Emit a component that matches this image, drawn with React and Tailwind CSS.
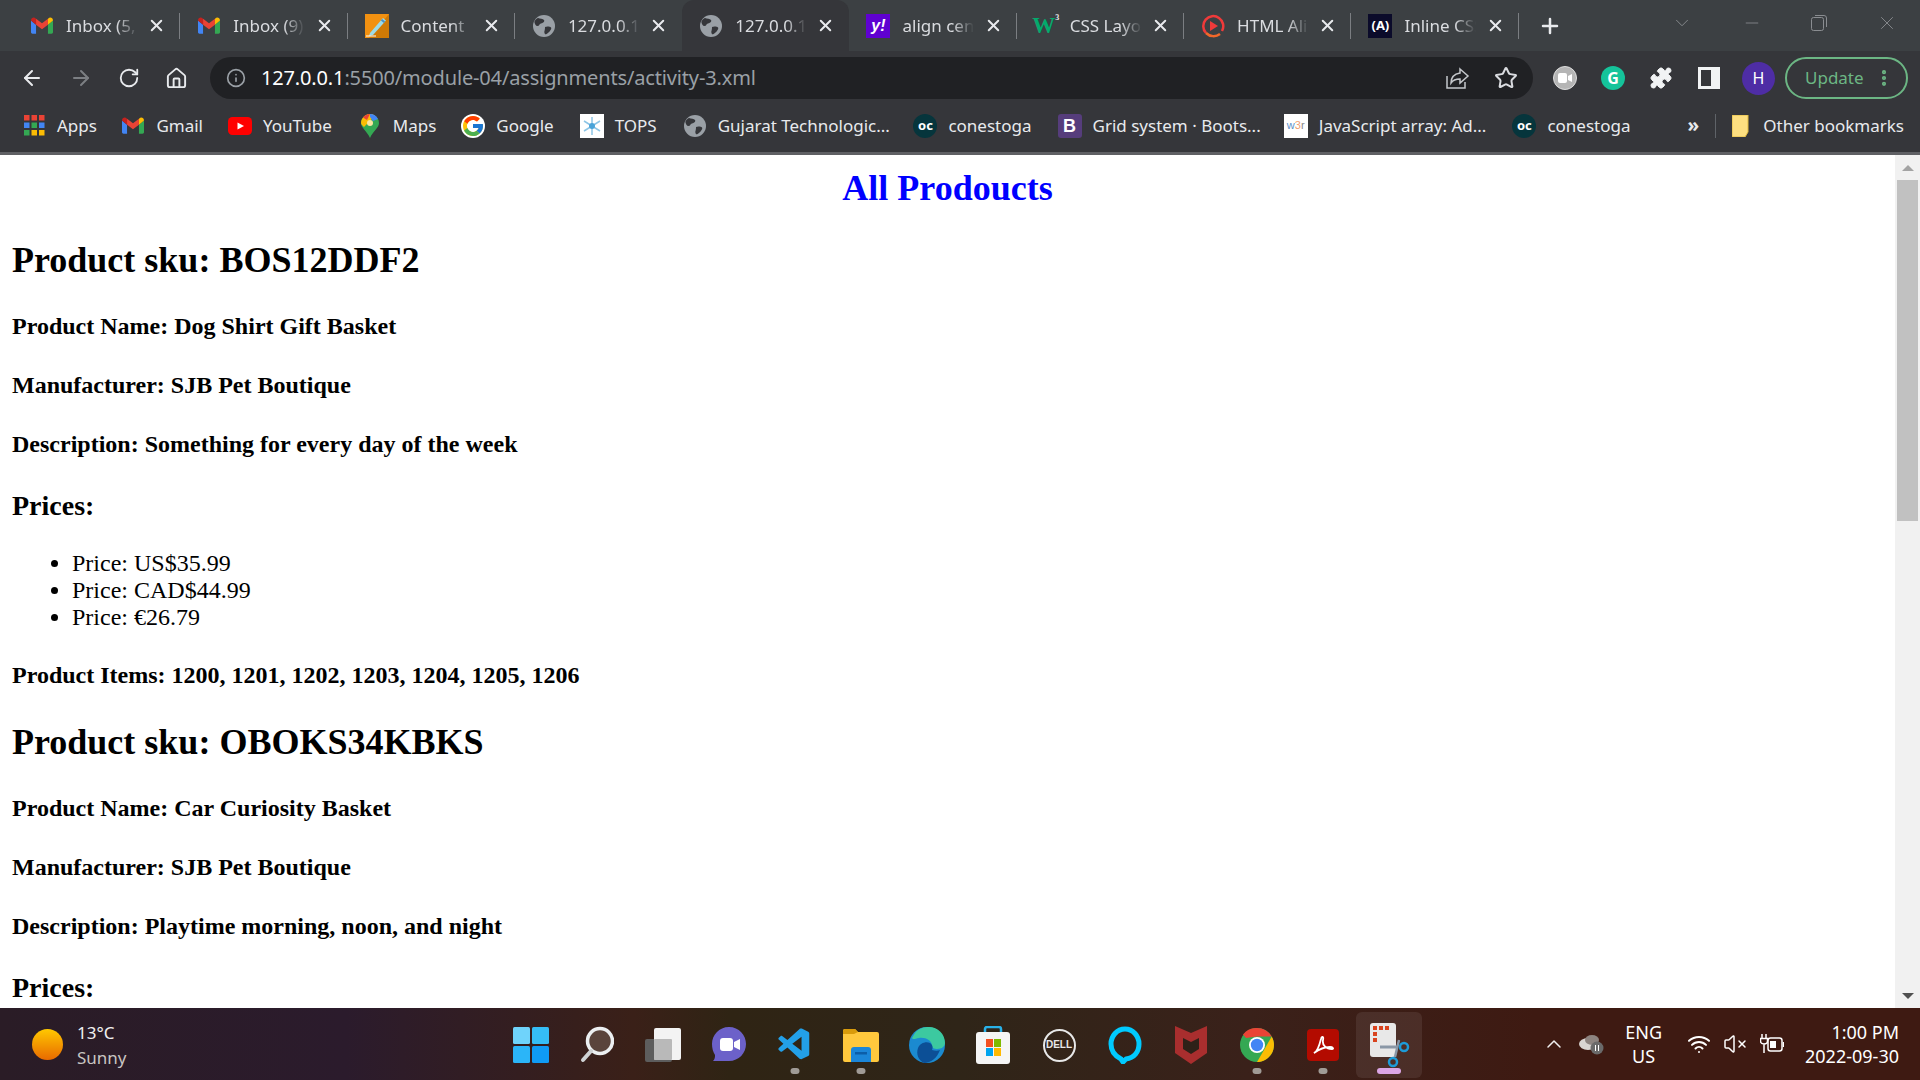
import React from 'react';
import { ArrowLeft, ArrowRight, RotateCw, Home, Info, Star, X, Plus, ChevronDown, Minus, MoreVertical, ChevronUp, Wifi, VolumeX, Puzzle } from 'lucide-react';
import { FcGoogle } from 'react-icons/fc';
import { VscVscode } from 'react-icons/vsc';

const ui = 'font-["Noto_Sans",sans-serif]';

// favicons
const Gmail = ({ size = 22 }) => (
  <svg width={size} height={size * 0.78} viewBox="0 0 24 18">
    <path d="M0 3.5V16.4C0 17.3.7 18 1.6 18H5.5V8L0 3.5z" fill="#4285f4" />
    <path d="M24 3.5V16.4c0 .9-.7 1.6-1.6 1.6H18.5V8L24 3.5z" fill="#34a853" />
    <path d="M5.5 8V1.5L12 6.5l6.5-5V8L12 13 5.5 8z" fill="#ea4335" />
    <path d="M0 3.5C0 .8 3-.8 5.1 1.2l.4.3V8L0 3.5z" fill="#c5221f" />
    <path d="M24 3.5C24 .8 21-.8 18.900 1.200l-.4.300V8L24 3.500z" fill="#fbbc04" />
  </svg>
);

const GlobeFav = ({ size = 22 }) => (
  <svg width={size} height={size} viewBox="0 0 22 22">
    <circle cx="11" cy="11" r="11" fill="#9aa0a6" />
    <path d="M5 3c2 1 5 .5 6 2s-1 3-3 3.500-1.500 2.500-3.500 2.500S2 9 1.500 7.500 3.500 3.500 5 3zM12 12c2-1 5-.5 6 .5s-1 4-3 5.500-3 2-3.500 0 .5-2 .5-6z" fill="#35363a" />
  </svg>
);

const Pencil = () => (
  <svg width="24" height="24" viewBox="0 0 24 24">
    <rect width="24" height="24" fill="#f29111" />
    <path d="M24 0v24H4z" fill="#cf7a06" />
    <path d="M5 19L18 4l3 2.500L8 21l-4 1z" fill="#9ddbe8" />
    <path d="M16.500 5.700l3 2.500" stroke="#4a90c2" strokeWidth="2" />
    <path d="M1 22h10" stroke="#fff" strokeWidth="1" />
  </svg>
);

const Yahoo = () => (
  <div className="w-6 h-6 bg-[#5f01d1] flex items-center justify-center text-white font-bold italic text-[16px] leading-none font-['Liberation_Sans',sans-serif]">y!</div>
);

const W3 = () => (
  <div className="flex items-start leading-none font-bold text-[#04aa6d] font-['Liberation_Serif',serif]">
    <span className="text-[23px]">W</span>
    <span className="text-[8px] text-[#e8eaed]">3</span>
  </div>
);

const HtmlAl = () => (
  <svg width="24" height="24" viewBox="0 0 24 24">
    <path d="M5 19A10 10 0 1 1 21 17" fill="none" stroke="#f03a3a" strokeWidth="2.500" />
    <path d="M5 19c4 4 10 4 14 1" fill="none" stroke="#f2682a" strokeWidth="2.500" />
    <path d="M9 7l8 5-8 5z" fill="#f03a3a" />
  </svg>
);

const InlineCss = () => (
  <div className="w-6 h-6 bg-[#0b0b2a] flex items-center justify-center text-white font-bold text-[13px] leading-none">(A)</div>
);

const tabs = [
  { icon: <Gmail />, title: 'Inbox (5,' },
  { icon: <Gmail />, title: 'Inbox (9)' },
  { icon: <Pencil />, title: 'Content' },
  { icon: <GlobeFav />, title: '127.0.0.1' },
  { icon: <GlobeFav />, title: '127.0.0.1', active: true },
  { icon: <Yahoo />, title: 'align cen' },
  { icon: <W3 />, title: 'CSS Layo' },
  { icon: <HtmlAl />, title: 'HTML Ali' },
  { icon: <InlineCss />, title: 'Inline CSS' },
];

const Tab = ({ icon, title, active, noSep }) => (
  <div className={`h-[51px] w-[167.3px] shrink-0 flex items-center pl-[16px] pr-[14px] relative ${active ? 'bg-[#35363a] rounded-t-[12px] h-[45px] self-end' : ''}`}>
    <div className="w-[26px] flex justify-center shrink-0">{icon}</div>
    <div className="ml-[11px] w-[72px] overflow-hidden whitespace-nowrap text-[17px] text-[#dadce0] [mask-image:linear-gradient(to_right,black_70%,transparent_100%)]">{title}</div>
    <X size={19} strokeWidth={2.5} className="ml-auto text-[#e8eaed] shrink-0" />
    {!noSep && <div className="absolute right-0 top-[13px] w-px h-[26px] bg-[#7b7e82]" />}
  </div>
);

const AppsGrid = () => (
  <svg width="21" height="21" viewBox="0 0 21 21">
    {[['#ea4335', '#ea4335', '#ea4335'], ['#4285f4', '#34a853', '#4285f4'], ['#34a853', '#fbbc04', '#fbbc04']].map((row, i) =>
      row.map((c, j) => <rect key={`${i}${j}`} x={j * 7.500} y={i * 7.500} width="5.500" height="5.500" fill={c} />)
    )}
  </svg>
);

const YouTube = () => (
  <svg width="24" height="18" viewBox="0 0 24 18">
    <rect width="24" height="18" rx="4.500" fill="#f00" />
    <path d="M9.500 5.500l6.500 3.500-6.500 3.500z" fill="#fff" />
  </svg>
);

const MapsPin = () => (
  <svg width="18" height="24" viewBox="0 0 18 24">
    <path d="M9 0a9 9 0 0 1 9 9c0 5-6 8-9 15-3-7-9-10-9-15a9 9 0 0 1 9-9z" fill="#34a853" />
    <path d="M2 3.500A9 9 0 0 1 9 0c2 0 3.500.6 5 1.700L3 13C1 11 0 10 0 9c0-2 .8-4 2-5.500z" fill="#fbbc04" />
    <path d="M2 3.500A9 9 0 0 1 9 0L6 6z" fill="#ea4335" />
    <path d="M9 0a9 9 0 0 1 8 5l-5 2-3-4z" fill="#4285f4" />
    <circle cx="9" cy="9" r="3" fill="#fbe5a0" />
  </svg>
);

const Tops = () => (
  <div className="w-6 h-6 bg-white flex items-center justify-center">
    <svg width="20" height="20" viewBox="0 0 20 20" stroke="#8cc5e6" strokeWidth="1.500" fill="none">
      <path d="M10 1v18M2 5l16 10M18 5L2 15" />
      <circle cx="10" cy="10" r="3" fill="#4aa3d8" stroke="none" />
    </svg>
  </div>
);

const Oc = () => (
  <div className="w-[24px] h-[24px] rounded-full bg-[#06353c] flex items-center justify-center text-white font-bold text-[13px] leading-none">oc</div>
);

const Bootstrap = () => (
  <div className="w-6 h-6 rounded-[3px] bg-[#563d7c] flex items-center justify-center text-white font-bold text-[18px] leading-none font-['Liberation_Sans',sans-serif]">B</div>
);

const W3r = () => (
  <div className="w-6 h-6 bg-white flex items-center justify-center text-[11px] leading-none font-['Liberation_Sans',sans-serif]">
    <span className="text-[#5b8fc9]">w</span><span className="text-[#f0a070]">3</span><span className="text-[#888]">r</span>
  </div>
);

const bookmarks = [
  { icon: <AppsGrid />, label: 'Apps', gap: 'ml-[22px]' },
  { icon: <Gmail />, label: 'Gmail', gap: 'ml-[24.5px]' },
  { icon: <YouTube />, label: 'YouTube', gap: 'ml-[25px]' },
  { icon: <MapsPin />, label: 'Maps', gap: 'ml-[26px]' },
  { icon: <FcGoogle size={24} className="bg-white rounded-full" />, label: 'Google', gap: 'ml-[25px]' },
  { icon: <Tops />, label: 'TOPS', gap: 'ml-[26px]' },
  { icon: <GlobeFav />, label: 'Gujarat Technologic...', gap: 'ml-[26px]' },
  { icon: <Oc />, label: 'conestoga', gap: 'ml-[23.5px]' },
  { icon: <Bootstrap />, label: 'Grid system · Boots...', gap: 'ml-[26px]' },
  { icon: <W3r />, label: 'JavaScript array: Ad...', gap: 'ml-[23px]' },
  { icon: <Oc />, label: 'conestoga', gap: 'ml-[26px]' },
];

const ChromeFrame = () => (
  <div className={`${ui} shrink-0`}>
    {/* tab strip */}
    <div className="h-[51px] bg-[#3c4043] flex items-end pl-[13px]">
      {tabs.map((t, i) => (
        <Tab key={i} {...t} noSep={t.active || tabs[i + 1]?.active} />
      ))}
      <div className="h-[51px] flex items-center ml-[19px]">
        <Plus size={24} strokeWidth={2.5} className="text-[#e8eaed]" />
      </div>
      <div className="h-[51px] ml-auto flex items-center pb-[6px] pr-[22px] gap-[49px] text-[#8a8d91]">
        <ChevronDown size={22} strokeWidth={1} />
        <Minus size={20} strokeWidth={1} />
        <svg width="16" height="16" viewBox="0 0 16 16" fill="none" stroke="currentColor"><rect x="0.500" y="2.500" width="12" height="13" rx="2" /><path d="M4 .500h9a2.500 2.500 0 0 1 2.500 2.500v9" /></svg>
        <X size={22} strokeWidth={1} />
      </div>
    </div>
    {/* toolbar */}
    <div className="h-[54px] bg-[#35363a] flex items-center pl-[20px]">
      <ArrowLeft size={24} strokeWidth={2} className="text-[#e8eaed]" />
      <ArrowRight size={24} strokeWidth={2} className="text-[#7c7f83] ml-[25px]" />
      <RotateCw size={22} strokeWidth={2} className="text-[#e8eaed] ml-[25px]" />
      <Home size={23} strokeWidth={2} className="text-[#e8eaed] ml-[25px]" />
      <div className="ml-[22px] w-[1323px] h-[42px] rounded-full bg-[#202124] flex items-center pl-[16px] pr-[15px]">
        <Info size={20} className="text-[#9aa0a6]" />
        <div className="ml-[15px] text-[20px] tracking-[-0.15px] whitespace-nowrap text-[#9aa0a6]">
          <span className="text-white">127.0.0.1</span>:5500/module-04/assignments/activity-3.xml
        </div>
        <svg className="ml-auto" width="24" height="22" viewBox="0 0 24 22" fill="none" stroke="#c4c7cb" strokeWidth="1.500">
          <path d="M1 9v12h18v-6" />
          <path d="M14 2l8 7-8 7v-4c-4 0-7 1-9 4 0-5 3-9 9-10z" />
        </svg>
        <Star size={24} strokeWidth={2} className="ml-[24px] text-[#dadce0]" />
      </div>
      <div className="ml-[20px] w-6 h-6 rounded-full bg-[#b5b5b5] border border-[#ddd] flex items-center justify-center">
        <svg width="14" height="10" viewBox="0 0 14 10"><rect width="9" height="10" rx="2" fill="#fff" /><path d="M10 3l4-2v8l-4-2z" fill="#fff" /></svg>
      </div>
      <div className="ml-[24px] w-6 h-6 rounded-full bg-[#15c39a] flex items-center justify-center text-white font-bold text-[16px] leading-none">G</div>
      <Puzzle size={24} fill="#f1f3f4" strokeWidth={1} className="ml-[24px] text-[#f1f3f4]" />
      <div className="ml-[25px] w-[22px] h-[22px] border-[3px] border-[#f1f3f4] border-r-[9px]" />
      <div className="ml-[22px] w-[33px] h-[33px] rounded-full bg-[#4e2da5] flex items-center justify-center text-white text-[16px]">H</div>
      <div className="ml-[10px] w-[123px] h-[42px] rounded-full border-2 border-[#6cb684] flex items-center pl-[18px] pr-[12px] text-[#6cb684] text-[17px]">
        Update
        <MoreVertical size={20} strokeWidth={3} className="ml-auto" />
      </div>
    </div>
    {/* bookmarks */}
    <div className="h-[47px] pb-[6px] bg-[#35363a] flex items-center pl-[22px] text-[17px] text-[#e8eaed] whitespace-nowrap">
      {bookmarks.map((b, i) => (
        <div key={i} className={`flex items-center gap-[11px] ${i === 0 ? '' : b.gap}`}>
          <div className="w-[24px] flex justify-center">{b.icon}</div>
          <span>{b.label}</span>
        </div>
      ))}
      <span className="ml-auto text-[19px] font-bold">»</span>
      <div className="ml-[16px] w-px h-[24px] bg-[#5f6368]" />
      <svg className="ml-[16px]" width="18" height="22" viewBox="0 0 18 22"><path d="M0 0h16v17l-3 5H0z" fill="#fddf80" stroke="#e0b93f" /></svg>
      <span className="ml-[13px] mr-[16px]">Other bookmarks</span>
    </div>
    <div className="h-[3px] bg-[#5f6064]" />
  </div>
);

const Product = ({ sku, name, desc, cut }) => (
  <>
    <h2 className="text-[36px] font-bold leading-[41px] mt-[31px] mb-[32px]">Product sku: {sku}</h2>
    <h4 className="text-[24px] font-bold leading-[27px] my-[32px]">Product Name: {name}</h4>
    <h4 className="text-[24px] font-bold leading-[27px] my-[32px]">Manufacturer: SJB Pet Boutique</h4>
    <h4 className="text-[24px] font-bold leading-[27px] my-[32px]">Description: {desc}</h4>
    <h3 className="text-[28px] font-bold leading-[32px] my-[28px]">Prices:</h3>
    {!cut && (
      <>
        <ul className="my-[24px] pl-[60px] list-disc text-[24px] leading-[27px]">
          <li>Price: US$35.99</li>
          <li>Price: CAD$44.99</li>
          <li>Price: €26.79</li>
        </ul>
        <h4 className="text-[24px] font-bold leading-[27px] mt-[31px] mb-[33px]">Product Items: 1200, 1201, 1202, 1203, 1204, 1205, 1206</h4>
      </>
    )}
  </>
);

const Page = () => (
  <div className="flex-1 min-h-0 flex bg-white">
    <div className="flex-1 min-w-0 overflow-hidden px-[12px] pt-[13px] text-black font-['Liberation_Serif',serif]">
      <h2 className="text-[36px] font-bold leading-[41px] text-center text-[#0000ff]">All Prodoucts</h2>
      <Product sku="BOS12DDF2" name="Dog Shirt Gift Basket" desc="Something for every day of the week" />
      <Product sku="OBOKS34KBKS" name="Car Curiosity Basket" desc="Playtime morning, noon, and night" cut />
    </div>
    {/* scrollbar */}
    <div className="w-[25px] shrink-0 bg-[#f1f1f1] flex flex-col">
      <div className="h-[25px] flex items-center justify-center">
        <div className="w-0 h-0 border-x-[6px] border-x-transparent border-b-[6px] border-b-[#a3a3a3]" />
      </div>
      <div className="mx-[2px] h-[341px] bg-[#c1c1c1]" />
      <div className="mt-auto h-[25px] flex items-center justify-center">
        <div className="w-0 h-0 border-x-[6px] border-x-transparent border-t-[6px] border-t-[#505050]" />
      </div>
    </div>
  </div>
);

const Dot = ({ color = 'bg-[#a09b96]', w = 'w-[9px]' }) => <div className={`absolute left-1/2 -translate-x-1/2 bottom-[4px] h-[6px] rounded-full ${w} ${color}`} />;

const TaskIcon = ({ children, dot, active }) => (
  <div className={`relative w-[66px] h-[66px] flex items-center justify-center rounded-[6px] ${active ? 'bg-[#ffffff14]' : ''}`}>
    {children}
    {dot && <Dot />}
    {active && <Dot color="bg-[#dba6e6]" w="w-[24px]" />}
  </div>
);

const WinLogo = () => (
  <svg width="36" height="36" viewBox="0 0 36 36">
    <rect width="17" height="17" rx="1.500" fill="#6fd3fb" />
    <rect x="19" width="17" height="17" rx="1.500" fill="#35bdf6" />
    <rect y="19" width="17" height="17" rx="1.500" fill="#2bb5f8" />
    <rect x="19" y="19" width="17" height="17" rx="1.500" fill="#0f9bf5" />
  </svg>
);

const SearchIcon = () => (
  <svg width="34" height="38" viewBox="0 0 34 38">
    <circle cx="20" cy="15" r="12.500" fill="#5a443c" stroke="#eceff1" strokeWidth="3.500" />
    <path d="M11 25L3 34" stroke="#cfd2d4" strokeWidth="4" strokeLinecap="round" />
  </svg>
);

const TaskView = () => (
  <svg width="38" height="36" viewBox="0 0 38 36">
    <rect x="1" y="12" width="27" height="23" rx="2" fill="#5d5d5d" />
    <rect x="10" y="1" width="27" height="32" rx="2" fill="#f3f3f3" />
    <rect x="10" y="12" width="18" height="21" rx="1" fill="#b9b9b9" />
  </svg>
);

const TeamsChat = () => (
  <svg width="36" height="38" viewBox="0 0 36 38">
    <path d="M18 1c10 0 17 8 17 17s-7 17-17 17H2c2-2 2-4 2-6-2-3-3-7-3-11C1 9 8 1 18 1z" fill="#6c61c9" />
    <rect x="9" y="12" width="13" height="13" rx="3" fill="#fff" />
    <path d="M23 16l6-3v11l-6-3z" fill="#fff" />
  </svg>
);

const Folder = () => (
  <svg width="36" height="36" viewBox="0 0 36 36">
    <path d="M0 4a2 2 0 0 1 2-2h10l3 3h19a2 2 0 0 1 2 2v26a2 2 0 0 1-2 2H2a2 2 0 0 1-2-2z" fill="#ffc83d" />
    <path d="M0 4a2 2 0 0 1 2-2h10l3 3-4 2H0z" fill="#d99b0b" />
    <path d="M8 35V23a3 3 0 0 1 3-3h14a3 3 0 0 1 3 3v12z" fill="#1b86d8" />
    <rect x="12" y="25" width="12" height="2.500" fill="#0c5ea8" />
  </svg>
);

const Edge = () => (
  <svg width="36" height="36" viewBox="0 0 36 36">
    <circle cx="18" cy="18" r="18" fill="#1b8ad0" />
    <path d="M6 6C10 1 15 0 20 0c9 0 16 7 16 16 0 3-3 6-8 6-3 0-5-1-5-3 0-6-7-9-13-8-4 .7-6 2-7 0z" fill="#3cc9a0" />
    <path d="M15 36C9 33 7 27 9 21c2-5 8-7 12-5 3 2 3 5 2 7 3 1 6 1 8 0-3 8-9 13-16 13z" fill="#0c4f96" />
  </svg>
);

const Store = () => (
  <svg width="34" height="38" viewBox="0 0 34 38">
    <path d="M9 8V3a2 2 0 0 1 2-2h12a2 2 0 0 1 2 2v5" fill="none" stroke="#29b1e8" strokeWidth="2.500" />
    <rect y="6" width="34" height="32" rx="3" fill="#f5f5f5" />
    <rect x="10" y="13" width="7" height="8" fill="#f25022" />
    <rect x="18" y="13" width="7" height="8" fill="#7fba00" />
    <rect x="10" y="22" width="7" height="8" fill="#00a4ef" />
    <rect x="18" y="22" width="7" height="8" fill="#ffb900" />
  </svg>
);

const Dell = () => (
  <div className="w-[33px] h-[33px] rounded-full border-2 border-[#e8e8e8] flex items-center justify-center text-[#e8e8e8] text-[10px] font-bold leading-none font-['Liberation_Sans',sans-serif]">DELL</div>
);

const Alexa = () => (
  <svg width="36" height="38" viewBox="0 0 36 38">
    <path d="M18 3C10 3 4 10 4 18c0 7 4 12 10 15l2 3 3-3c8-1 13-7 13-15S26 3 18 3z" fill="none" stroke="#00caff" strokeWidth="5" />
  </svg>
);

const McAfee = () => (
  <svg width="32" height="38" viewBox="0 0 32 38">
    <path d="M0 0l16 7 16-7v27l-16 11L0 27z" fill="#a92e2e" />
    <path d="M8 12l8 4 8-4v11l-8 5-8-5z" fill="#2e2118" />
  </svg>
);

const ChromeLogo = () => (
  <svg width="34" height="34" viewBox="0 0 34 34">
    <circle cx="17" cy="17" r="17" fill="#34a853" />
    <path d="M17 0a17 17 0 0 1 14.700 8.500H17L6 10 3 6.500A17 17 0 0 1 17 0z" fill="#ea4335" />
    <path d="M31.700 8.500A17 17 0 0 1 17 34l7-12z" fill="#fbbc04" />
    <circle cx="17" cy="17" r="8" fill="#fff" />
    <circle cx="17" cy="17" r="6.200" fill="#4285f4" />
  </svg>
);

const Acrobat = () => (
  <div className="w-[32px] h-[32px] rounded-[4px] bg-[#b30b00] flex items-center justify-center">
    <svg width="22" height="22" viewBox="0 0 22 22" fill="none" stroke="#fff" strokeWidth="1.800">
      <path d="M2 19c3-1 5-6 7-14 .5-3 3-3 2 1-1 5 3 9 9 9 2 0 1-2-2-2-6 0-12 3-16 6z" />
    </svg>
  </div>
);

const Snip = () => (
  <svg width="42" height="46" viewBox="0 0 42 46">
    <rect x="2" y="1" width="26" height="34" rx="3" fill="#e8e8e8" />
    <rect x="5" y="4" width="4" height="4" fill="#d9431e" />
    <rect x="11" y="4" width="4" height="4" fill="#d9431e" />
    <rect x="17" y="4" width="4" height="4" fill="#d9431e" />
    <rect x="5" y="10" width="4" height="4" fill="#d9431e" />
    <rect x="5" y="16" width="4" height="4" fill="#d9431e" />
    <path d="M12 25h17" stroke="#8a97a6" strokeWidth="3" />
    <path d="M31 18l-4 17" stroke="#8a97a6" strokeWidth="2.500" />
    <circle cx="25" cy="40" r="4" fill="none" stroke="#1d9bd8" strokeWidth="2.500" />
    <circle cx="36" cy="25" r="4" fill="none" stroke="#1d9bd8" strokeWidth="2.500" />
  </svg>
);

const Taskbar = () => (
  <div className={`${ui} h-[72px] shrink-0 grid grid-cols-[1fr_auto_1fr] items-center text-white bg-[linear-gradient(to_right,#2a1c26_0%,#2b1b2c_18%,#3a2018_33%,#2f2414_38%,#2f2518_50%,#3a211a_65%,#3e1a12_80%,#3e1a12_100%)]`}>
    {/* weather */}
    <div className="flex items-center pl-[32px]">
      <div className="w-[31px] h-[31px] rounded-full bg-[linear-gradient(to_bottom,#ffc800,#e86a00)]" />
      <div className="ml-[14px] text-[17px] leading-[25px] pt-[1px]">
        <div className="text-[#f0f0f0]">13°C</div>
        <div className="text-[#c9c5c2]">Sunny</div>
      </div>
    </div>
    {/* pinned apps */}
    <div className="flex items-center pt-[2px]">
      <TaskIcon><WinLogo /></TaskIcon>
      <TaskIcon><SearchIcon /></TaskIcon>
      <TaskIcon><TaskView /></TaskIcon>
      <TaskIcon><TeamsChat /></TaskIcon>
      <TaskIcon dot><VscVscode size={38} className="text-[#23a0e8]" /></TaskIcon>
      <TaskIcon dot><Folder /></TaskIcon>
      <TaskIcon><Edge /></TaskIcon>
      <TaskIcon><Store /></TaskIcon>
      <TaskIcon><Dell /></TaskIcon>
      <TaskIcon><Alexa /></TaskIcon>
      <TaskIcon><McAfee /></TaskIcon>
      <TaskIcon dot><ChromeLogo /></TaskIcon>
      <TaskIcon dot><Acrobat /></TaskIcon>
      <TaskIcon active><Snip /></TaskIcon>
    </div>
    {/* tray */}
    <div className="flex items-center justify-end pr-[21px] text-[18px]">
      <ChevronUp size={24} strokeWidth={1.5} className="text-[#f0f0f0]" />
      <svg className="ml-[12px]" width="26" height="22" viewBox="0 0 26 22">
        <ellipse cx="10" cy="11" rx="9" ry="6" fill="#d9d5d2" />
        <ellipse cx="14" cy="7" rx="7" ry="5" fill="#8d8480" />
        <circle cx="19" cy="15" r="6.500" fill="#6a6a6a" />
        <path d="M17.500 12v6M20.500 12v6" stroke="#fff" />
      </svg>
      <div className="ml-[21px] text-center leading-[24px]">
        <div>ENG</div>
        <div>US</div>
      </div>
      <Wifi size={24} strokeWidth={2} className="ml-[25px]" />
      <VolumeX size={24} strokeWidth={1.5} className="ml-[12px]" />
      <svg className="ml-[13px]" width="24" height="22" viewBox="0 0 24 22" fill="none" stroke="#fff" strokeWidth="1.500">
        <path d="M2 1v4M6 1v4M0.500 5.500h7V8c0 2-1.500 3-3.500 3S.5 10 .5 8zM4 11v9" />
        <rect x="8" y="5" width="14" height="13" rx="2.500" />
        <rect x="10" y="8" width="6" height="7" fill="#fff" stroke="none" />
        <path d="M23.500 9v5" />
      </svg>
      <div className="ml-[21px] text-right leading-[24px]">
        <div>1:00 PM</div>
        <div>2022-09-30</div>
      </div>
    </div>
  </div>
);

export default function App() {
  return (
    <div className="w-[1920px] h-[1080px] flex flex-col overflow-hidden">
      <ChromeFrame />
      <Page />
      <Taskbar />
    </div>
  );
}
